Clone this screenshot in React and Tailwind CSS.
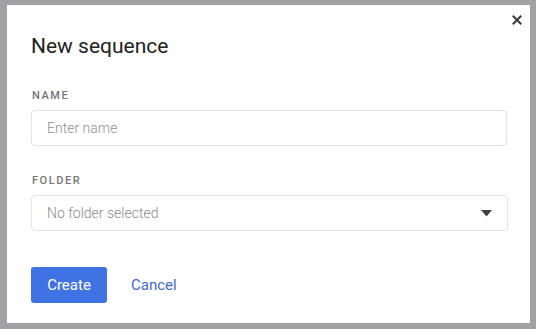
export default function App() {
  return (
    <div
      className="w-[536px] h-[329px] bg-[#a2a1a4] pl-[7px] pt-[5px] pr-[6px] pb-[6px]"
      style={{ fontFamily: "Roboto, 'Noto Sans', sans-serif" }}
    >
      <div className="relative w-[523px] h-[318px] bg-white pl-[24px] pt-[27px]">
        {/* close */}
        <button className="absolute right-[8px] top-[10px] w-[10px] h-[10px] flex items-center justify-center">
          <svg width="10" height="10" viewBox="0 0 10 10">
            <path d="M1.5 1.5 L8.5 8.5 M8.5 1.5 L1.5 8.5" stroke="#3a3a3a" strokeWidth="2" strokeLinecap="square" />
          </svg>
        </button>

        <h2 className="text-[21px] leading-[28px] text-[#222222] font-normal">New sequence</h2>

        <div className="mt-[28px]">
          <label className="block text-[11px] leading-[16px] tracking-[0.14em] font-medium text-[#757575] ml-[1px]">
            NAME
          </label>
          <div className="mt-[6px] w-[476px] h-[36px] border border-[#e3e3e3] rounded-[4px] flex items-center px-[15px]">
            <span className="text-[14px] font-light text-[#8f8f8f]">Enter name</span>
          </div>
        </div>

        <div className="mt-[27px]">
          <label className="block text-[11px] leading-[16px] tracking-[0.14em] font-medium text-[#757575] ml-[1px]">
            FOLDER
          </label>
          <div className="mt-[6px] w-[477px] h-[36px] border border-[#e3e3e3] rounded-[4px] flex items-center justify-between pl-[15px] pr-[15px]">
            <span className="text-[14px] font-light text-[#8a8a8a]">No folder selected</span>
            <svg width="11" height="7" viewBox="0 0 11 7">
              <path d="M0 0 H11 L5.5 6.5 Z" fill="#3f3f3f" />
            </svg>
          </div>
        </div>

        <div className="mt-[36px] flex items-center gap-[24px]">
          <button className="w-[76px] h-[36px] rounded-[3px] bg-[#3f72e2] text-white text-[15px]">Create</button>
          <button className="text-[15px] text-[#4169d1]">Cancel</button>
        </div>
      </div>
    </div>
  );
}
